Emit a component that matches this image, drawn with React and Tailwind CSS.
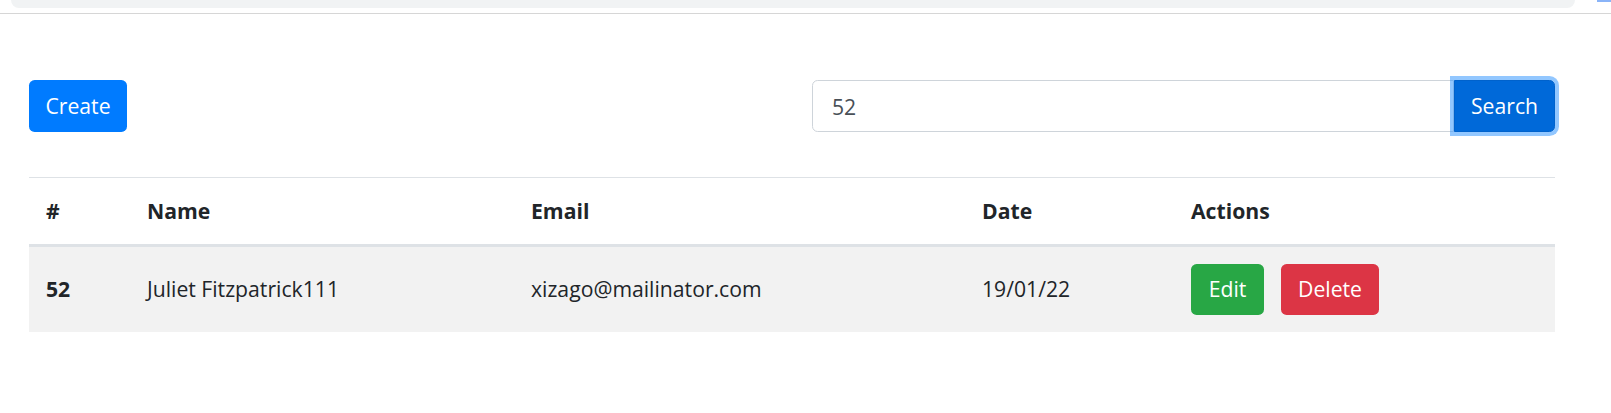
import { useState } from 'react';

const rows = [
  { id: 52, name: 'Juliet Fitzpatrick111', email: 'xizago@mailinator.com', date: '19/01/22' },
];

export default function App() {
  const [query, setQuery] = useState('52');

  return (
    <div className="w-[1611px] h-[413px] bg-white overflow-hidden text-[#212529] font-['Open_Sans','Noto_Sans',sans-serif] text-[21.2px] leading-[33.6px]">
      {/* browser chrome remnant */}
      <div className="relative h-[14px]">
        <div className="ml-[11px] mr-[36px] h-[8px] bg-[#f1f3f4] rounded-b-[10px]" />
        <div className="absolute right-0 top-0 w-[14px] h-[2px] bg-[#8ab4f8]" />
        <div className="mt-[5px] h-px bg-[#d6d6d6]" />
      </div>

      <div className="pl-[29px] w-[1555px] pt-[66px]">
        <div className="flex items-start justify-between">
          <button className="w-[98px] h-[52px] bg-[#007bff] text-white rounded-[5.6px] flex items-center justify-center">
            Create
          </button>
          <div className="flex h-[52px]">
            <input
              value={query}
              onChange={(e) => setQuery(e.target.value)}
              className="w-[642px] h-full pl-[19px] text-[#495057] border border-[#ced4da] rounded-l-[5.6px] outline-none"
            />
            <button className="relative z-10 w-[101px] h-full bg-[#0069d9] border border-[#0062cc] text-white rounded-r-[5.6px] shadow-[0_0_0_4px_rgba(38,143,255,0.5)] flex items-center justify-center">
              Search
            </button>
          </div>
        </div>

        <table className="mt-[45px] w-[1526px] table-fixed border-collapse">
          <colgroup>
            <col className="w-[101px]" />
            <col className="w-[384px]" />
            <col className="w-[451px]" />
            <col className="w-[209px]" />
            <col />
          </colgroup>
          <thead>
            <tr className="border-t-[1.5px] border-[#dee2e6]">
              {['#', 'Name', 'Email', 'Date', 'Actions'].map((h) => (
                <th key={h} className="text-left font-bold px-[17px] py-[16px] border-b-[3px] border-[#dee2e6]">{h}</th>
              ))}
            </tr>
          </thead>
          <tbody>
            {rows.map((r) => (
              <tr key={r.id} className="bg-[#f2f2f2]">
                <td className="px-[17px] py-[17px] font-bold">{r.id}</td>
                <td className="px-[17px] py-[17px]">{r.name}</td>
                <td className="px-[17px] py-[17px]">{r.email}</td>
                <td className="px-[17px] py-[17px]">{r.date}</td>
                <td className="px-[17px] py-[17px]">
                  <div className="flex gap-[17px]">
                    <button className="w-[73px] h-[51px] bg-[#28a745] text-white rounded-[5.6px] flex items-center justify-center">Edit</button>
                    <button className="w-[98px] h-[51px] bg-[#dc3545] text-white rounded-[5.6px] flex items-center justify-center">Delete</button>
                  </div>
                </td>
              </tr>
            ))}
          </tbody>
        </table>
      </div>
    </div>
  );
}
